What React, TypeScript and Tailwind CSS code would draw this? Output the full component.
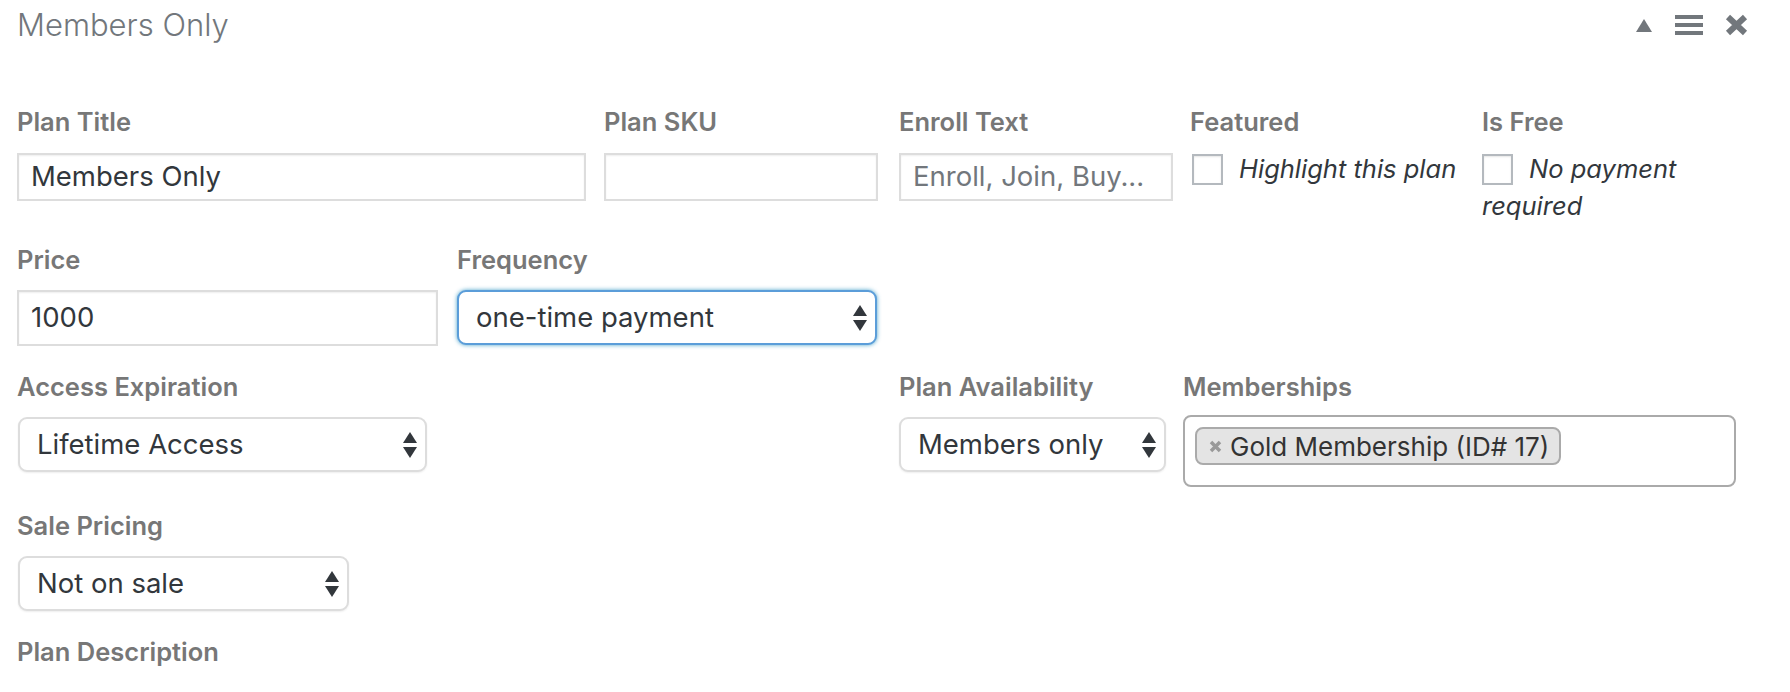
import type { ReactNode } from 'react';

const Label = ({ children }: { children: ReactNode }) => (
  <div className="h-[30px] text-[25.5px] leading-[30px] font-semibold text-[#777777]">{children}</div>
);

const Arrows = () => (
  <svg width="14" height="26" viewBox="0 0 14 26" className="shrink-0">
    <polygon points="7,0 14,11 0,11" fill="#32373c" />
    <polygon points="0,15 14,15 7,26" fill="#32373c" />
  </svg>
);

type SelectProps = {
  readonly value: string;
  readonly className: string;
  readonly focused?: boolean;
};

function FakeSelect({ value, className, focused }: SelectProps) {
  return (
    <div
      className={
        'flex h-[55px] items-center justify-between rounded-[9px] bg-white pl-[17px] pr-[8px] text-[27.5px] text-[#32373c] ' +
        (focused
          ? 'border-2 border-[#5b9dd9] shadow-[0_0_4px_rgba(30,140,190,0.8)] '
          : 'border-2 border-[#dddddd] shadow-[0_1px_2px_rgba(0,0,0,0.07)] ') +
        className
      }
    >
      <span>{value}</span>
      <Arrows />
    </div>
  );
}

const TextInput = ({ value, placeholder, className }: { value?: string; placeholder?: string; className: string }) => (
  <div
    className={
      'flex items-center border-2 border-[#dddddd] bg-white pl-[12px] text-[27.5px] shadow-[inset_0_1px_2px_rgba(0,0,0,0.07)] ' +
      className
    }
  >
    {value ? <span className="text-[#32373c]">{value}</span> : <span className="text-[#72777c]">{placeholder}</span>}
  </div>
);

const Checkbox = () => (
  <span className="mr-[16px] inline-block h-[31px] w-[31px] border-2 border-[#b4b9be] bg-white align-[-7px] shadow-[inset_0_1px_2px_rgba(0,0,0,0.1)]" />
);

export default function App() {
  return (
    <div className="min-h-screen w-[1790px] bg-white font-['Inter',sans-serif]">
      {/* header */}
      <div className="flex h-[50px] items-center justify-between pl-[17px] pr-[42px]">
        <h2 className="text-[31px] font-light leading-[50px] text-[#72777c]">Members Only</h2>
        <div className="flex items-center">
          <svg width="16" height="13" viewBox="0 0 16 13">
            <polygon points="8,0 16,13 0,13" fill="#72777c" />
          </svg>
          <svg width="28" height="20" viewBox="0 0 28 20" className="ml-[23px]">
            <rect x="0" y="0" width="28" height="4" fill="#72777c" />
            <rect x="0" y="8" width="28" height="4" fill="#72777c" />
            <rect x="0" y="16" width="28" height="4" fill="#72777c" />
          </svg>
          <svg width="23" height="22" viewBox="0 0 23 22" className="ml-[22px]">
            <path d="M3 3 L20 19 M20 3 L3 19" stroke="#72777c" strokeWidth="6" />
          </svg>
        </div>
      </div>

      <div className="pl-[17px]">
        {/* row 1 */}
        <div className="mt-[57px] flex items-start">
          <div className="w-[587px]">
            <Label>Plan Title</Label>
            <TextInput value="Members Only" className="mt-[16px] h-[48px] w-[569px]" />
          </div>
          <div className="w-[295px]">
            <Label>Plan SKU</Label>
            <TextInput className="mt-[16px] h-[48px] w-[274px]" />
          </div>
          <div className="w-[291px]">
            <Label>Enroll Text</Label>
            <TextInput placeholder="Enroll, Join, Buy..." className="mt-[16px] h-[48px] w-[274px]" />
          </div>
          <div className="w-[292px]">
            <Label>Featured</Label>
            <div className="mt-[13px] pl-[2px] text-[25.5px] italic leading-[37px] text-[#32373c]">
              <Checkbox />
              Highlight this plan
            </div>
          </div>
          <div className="w-[254px]">
            <Label>Is Free</Label>
            <div className="mt-[13px] text-[25.5px] italic leading-[37px] text-[#32373c]">
              <Checkbox />
              No payment required
            </div>
          </div>
        </div>

        {/* row 2 */}
        <div className="mt-[21px] flex items-start">
          <div className="w-[440px]">
            <Label>Price</Label>
            <TextInput value="1000" className="mt-[15px] h-[56px] w-[421px]" />
          </div>
          <div>
            <Label>Frequency</Label>
            <FakeSelect value="one-time payment" focused className="mt-[15px] w-[420px]" />
          </div>
        </div>

        {/* row 3 */}
        <div className="mt-[26px] flex items-start">
          <div className="w-[882px]">
            <Label>Access Expiration</Label>
            <FakeSelect value="Lifetime Access" className="ml-[1px] mt-[15px] w-[409px]" />
          </div>
          <div className="w-[284px]">
            <Label>Plan Availability</Label>
            <FakeSelect value="Members only" className="mt-[15px] w-[267px]" />
          </div>
          <div>
            <Label>Memberships</Label>
            <div className="mt-[13px] h-[72px] w-[553px] rounded-[8px] border-2 border-[#aaaaaa] bg-white pl-[10px] pt-[10px]">
              <span className="inline-flex h-[38px] items-center rounded-[8px] border-2 border-[#aaaaaa] bg-[#e4e4e4] pl-[12px] pr-[10px] text-[26px] text-[#333333]">
                <svg width="13" height="13" viewBox="0 0 13 13" className="mr-[8px]">
                  <path d="M2 2 L11 11 M11 2 L2 11" stroke="#999999" strokeWidth="3.5" />
                </svg>
                Gold Membership (ID# 17)
              </span>
            </div>
          </div>
        </div>

        {/* row 4 */}
        <div className="mt-[24px]">
          <Label>Sale Pricing</Label>
          <FakeSelect value="Not on sale" className="ml-[1px] mt-[15px] w-[331px]" />
        </div>

        {/* row 5 */}
        <div className="mt-[26px]">
          <Label>Plan Description</Label>
        </div>
      </div>
    </div>
  );
}
